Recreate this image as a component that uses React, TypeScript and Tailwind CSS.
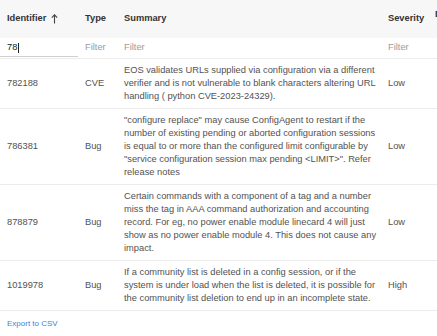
import React from "react";

type Row = { id: string; type: string; lines: string[]; sev: string };

const rows: Row[] = [
  {
    id: "782188",
    type: "CVE",
    lines: [
      "EOS validates URLs supplied via configuration via a different",
      "verifier and is not vulnerable to blank characters altering URL",
      "handling ( python CVE-2023-24329).",
    ],
    sev: "Low",
  },
  {
    id: "786381",
    type: "Bug",
    lines: [
      "\"configure replace\" may cause ConfigAgent to restart if the",
      "number of existing pending or aborted configuration sessions",
      "is equal to or more than the configured limit configurable by",
      "\"service configuration session max pending <LIMIT>\". Refer",
      "release notes",
    ],
    sev: "Low",
  },
  {
    id: "878879",
    type: "Bug",
    lines: [
      "Certain commands with a component of a tag and a number",
      "miss the tag in AAA command authorization and accounting",
      "record. For eg, no power enable module linecard 4 will just",
      "show as no power enable module 4. This does not cause any",
      "impact.",
    ],
    sev: "Low",
  },
  {
    id: "1019978",
    type: "Bug",
    lines: [
      "If a community list is deleted in a config session, or if the",
      "system is under load when the list is deleted, it is possible for",
      "the community list deletion to end up in an incomplete state.",
    ],
    sev: "High",
  },
];

const cols = "grid grid-cols-[78px_39px_264px_47px_92px]";

export default function App() {
  return (
    <div className="w-[437px] h-[336px] overflow-hidden bg-white font-['Liberation_Sans','Helvetica',sans-serif] text-[9.3px] text-[#525252]">
      <div className="w-[520px]">
        {/* header */}
        <div className={`${cols} h-[38px] bg-[#f7f7f7] font-semibold text-[#333]`}>
          <div className="flex items-center px-[7px]">
            <span>Identifier</span>
            <svg className="ml-[5px]" width="7" height="10" viewBox="0 0 7 10" fill="none" stroke="#444" strokeWidth="1.1">
              <path d="M3.5 9.5V1M0.8 3.6L3.5 0.9L6.2 3.6" />
            </svg>
          </div>
          <div className="flex items-center px-[7px]">Type</div>
          <div className="flex items-center px-[7px]">Summary</div>
          <div className="flex items-center px-[7px]">Severity</div>
          <div className="px-[7px] pt-[8px]">D</div>
        </div>
        {/* filter row */}
        <div className={`${cols} h-[21px] border-b border-[#ececec]`}>
          <div className="flex items-center px-[7px] border-b border-[#cfcfcf] h-[19px] pt-[1px] text-[#222]">
            <span>78</span>
            <span className="ml-[1px] inline-block w-px h-[10px] bg-[#222]" />
          </div>
          <div className="flex items-center px-[7px] text-[#9b9b9b]">Filter</div>
          <div className="flex items-center px-[7px] text-[#9b9b9b]">Filter</div>
          <div className="flex items-center px-[7px] text-[#9b9b9b]">Filter</div>
          <div />
        </div>
        {rows.map((r) => (
          <div key={r.id} className={`${cols} border-b border-[#ececec] py-[5px] leading-[13px]`}>
            <div className="flex items-center px-[7px]">{r.id}</div>
            <div className="flex items-center px-[7px]">{r.type}</div>
            <div className="px-[7px]">
              {r.lines.map((l, i) => (
                <div key={i} className="whitespace-nowrap">
                  {l}
                </div>
              ))}
            </div>
            <div className="flex items-center px-[7px]">{r.sev}</div>
            <div />
          </div>
        ))}
        <div className="h-[26px] flex items-center px-[7px] border-b border-[#ececec]">
          <span className="text-[8px] text-[#3f7fd9]">Export to CSV</span>
        </div>
      </div>
    </div>
  );
}
